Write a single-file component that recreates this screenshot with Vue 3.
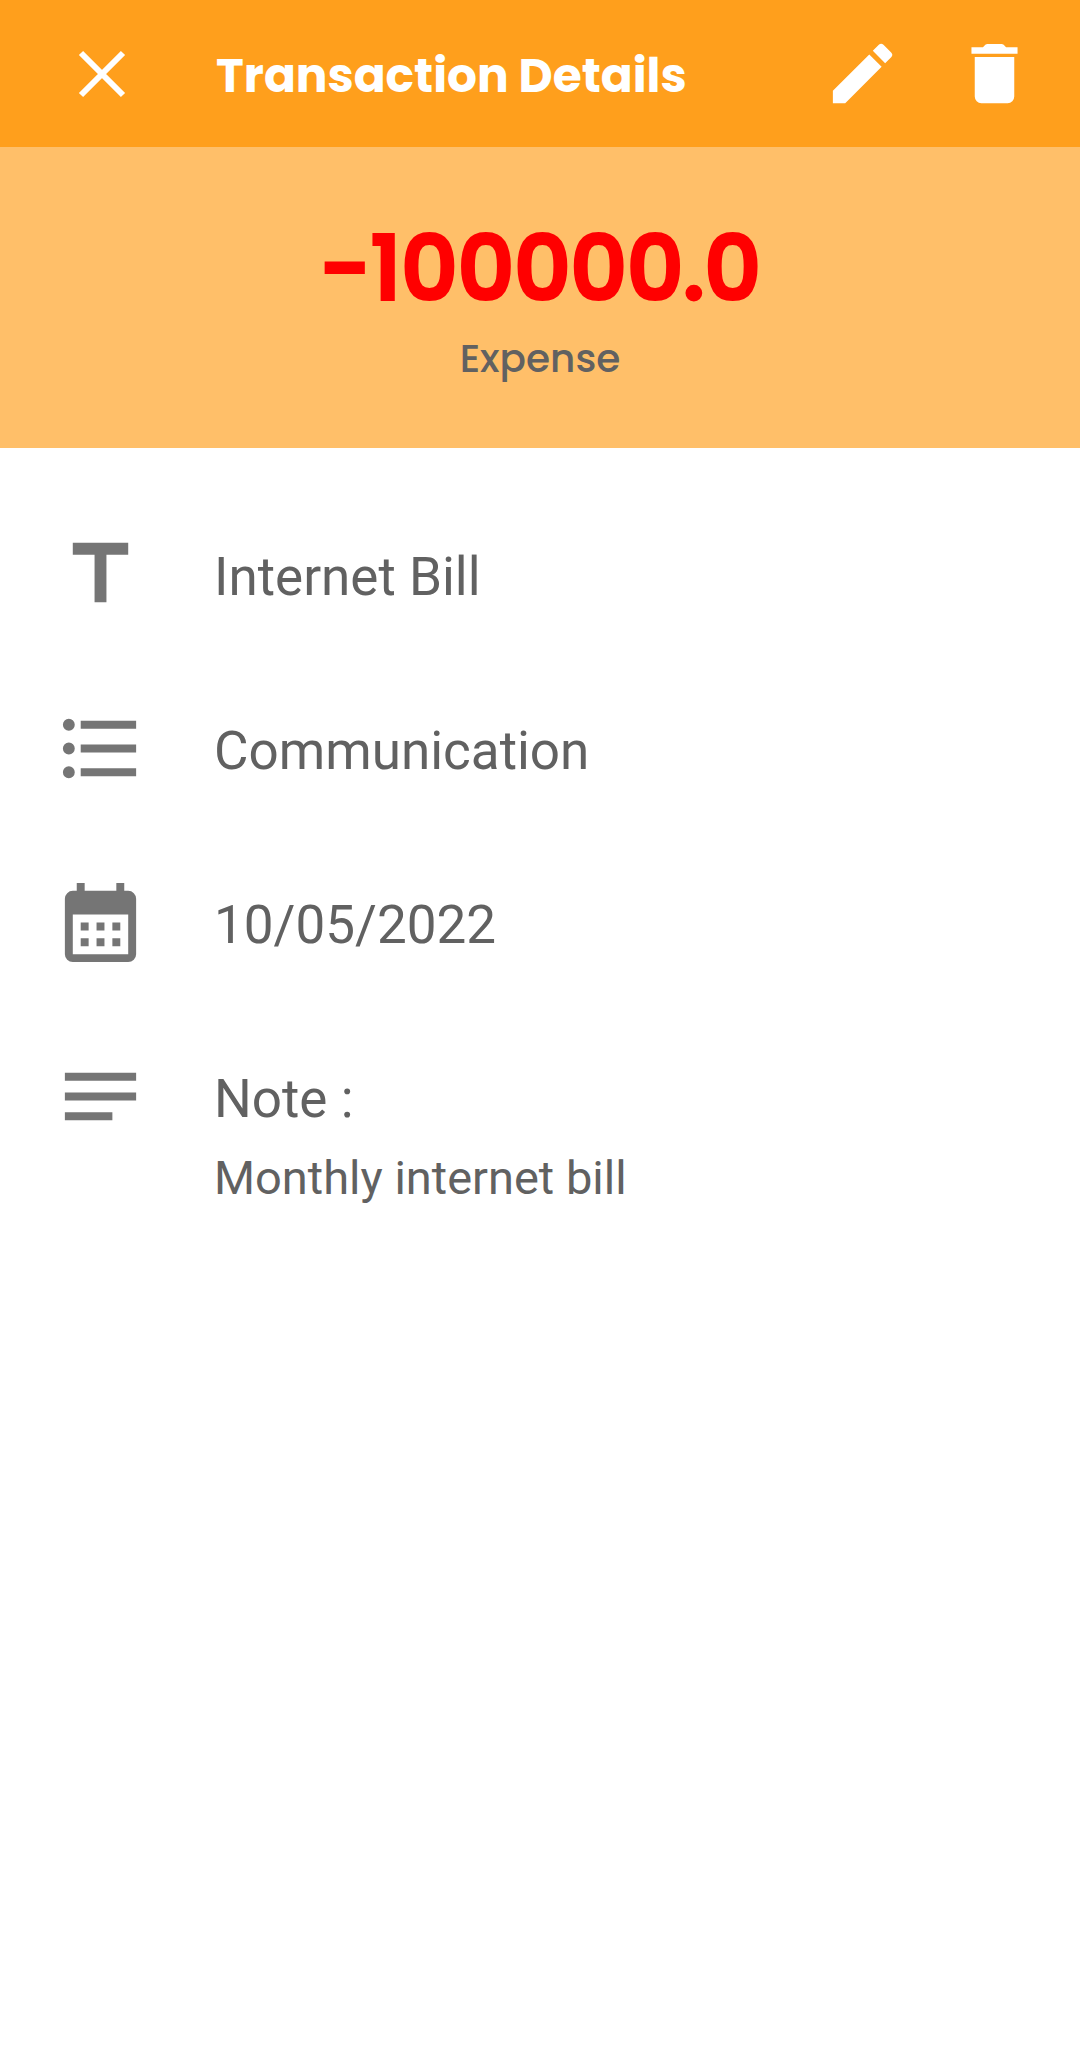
<script setup>
const transaction = {
  amount: '-100000.0',
  type: 'Expense',
  title: 'Internet Bill',
  category: 'Communication',
  date: '10/05/2022',
  note: 'Monthly internet bill',
}

const rows = [
  { id: 'title', text: transaction.title, icon: 'M5 4v3h5.5v12h3V7H19V4z' },
  {
    id: 'category',
    text: transaction.category,
    icon: 'M4 10.5a1.5 1.5 0 1 0 0 3 1.5 1.5 0 0 0 0-3zm0-6a1.5 1.5 0 1 0 0 3 1.5 1.5 0 0 0 0-3zm0 12a1.5 1.5 0 1 0 0 3 1.5 1.5 0 0 0 0-3zM7 19h14v-2H7v2zm0-6h14v-2H7v2zm0-8v2h14V5H7z',
  },
  {
    id: 'date',
    text: transaction.date,
    icon: 'M19 4h-1V2h-2v2H8V2H6v2H5a2 2 0 0 0-2 2v14a2 2 0 0 0 2 2h14a2 2 0 0 0 2-2V6a2 2 0 0 0-2-2zm0 16H5V10h14v10zM7 12h2v2H7zm4 0h2v2h-2zm4 0h2v2h-2zM7 16h2v2H7zm4 0h2v2h-2zm4 0h2v2h-2z',
  },
  {
    id: 'note',
    text: 'Note :',
    detail: transaction.note,
    icon: 'M3 18h12v-2H3v2zM3 6v2h18V6H3zm0 7h18v-2H3v2z',
  },
]
</script>

<template>
  <div class="screen">
    <header class="bar">
      <button class="close" type="button" aria-label="Close">
        <svg viewBox="0 0 48 48" aria-hidden="true">
          <path d="M3 3L45 45M45 3L3 45" />
        </svg>
      </button>
      <h1>Transaction Details</h1>
      <div class="actions">
        <button type="button" aria-label="Edit">
          <svg viewBox="0 0 24 24" aria-hidden="true">
            <path d="M3 17.250V21h3.750L17.810 9.940l-3.750-3.750L3 17.250zM20.710 7.040a.996.996 0 0 0 0-1.410l-2.340-2.340a.996.996 0 0 0-1.410 0l-1.830 1.830 3.750 3.750 1.830-1.830z" />
          </svg>
        </button>
        <button type="button" aria-label="Delete">
          <svg viewBox="0 0 24 24" aria-hidden="true">
            <path d="M6 19a2 2 0 0 0 2 2h8a2 2 0 0 0 2-2V7H6v12zM19 4h-3.500l-.7-.7a1 1 0 0 0-.7-.3H9.900a1 1 0 0 0-.7.3l-.7.7H5v2h14V4z" />
          </svg>
        </button>
      </div>
    </header>

    <section class="summary">
      <p class="amount">{{ transaction.amount }}</p>
      <p class="type">{{ transaction.type }}</p>
    </section>

    <ul class="details">
      <li v-for="row in rows" :key="row.id">
        <svg viewBox="0 0 24 24" aria-hidden="true"><path :d="row.icon" /></svg>
        <div class="copy">
          <p class="value">{{ row.text }}</p>
          <p v-if="row.detail" class="note">{{ row.detail }}</p>
        </div>
      </li>
    </ul>
  </div>
</template>

<style>
body {
  background: #ffffff;
}
</style>

<style scoped>
.screen {
  min-height: 100vh;
  background: #ffffff;
  color: #616161;
  font-family: Roboto, sans-serif;
}

h1,
p,
ul {
  margin: 0;
  padding: 0;
}

.bar {
  display: flex;
  align-items: center;
  height: 147px;
  padding: 0 46px 0 54px;
  background: #ff9f1c;
  color: #ffffff;
}

button {
  display: flex;
  align-items: center;
  justify-content: center;
  padding: 0;
  border: 0;
  background: none;
  color: inherit;
  cursor: pointer;
}

.close {
  width: 96px;
  height: 96px;
  margin-right: 66px;
}

.close svg {
  width: 48px;
  height: 48px;
  fill: none;
  stroke: currentColor;
  stroke-width: 6;
}

h1 {
  flex: 1;
  padding-top: 4px;
  font: 700 47px/72px Poppins, Inter, sans-serif;
  white-space: nowrap;
}

.actions {
  display: flex;
  gap: 53px;
}

.actions svg {
  width: 79px;
  height: 79px;
  fill: currentColor;
}

.summary {
  padding: 64px 0 58px;
  background: #ffbf69;
  font-family: Poppins, Inter, sans-serif;
  text-align: center;
}

.amount {
  color: #ff0000;
  font-size: 88px;
  font-weight: 500;
  line-height: 116px;
  -webkit-text-stroke: 4px currentColor;
}

.type {
  font-size: 39px;
  font-weight: 500;
  line-height: 63px;
}

.details {
  padding: 79px 53px;
  list-style: none;
}

li {
  display: flex;
  gap: 66px;
  min-height: 174px;
}

li svg {
  flex: none;
  width: 95px;
  height: 95px;
  fill: #757575;
}

.value {
  font-size: 53px;
  line-height: 100px;
}

.note {
  font-size: 47px;
  line-height: 58px;
}
</style>
